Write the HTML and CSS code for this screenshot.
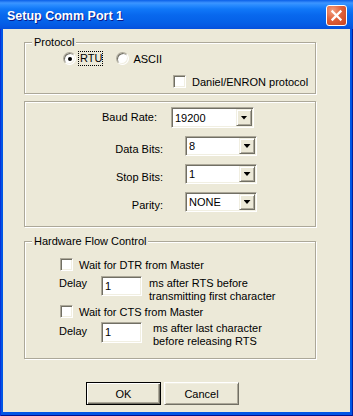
FILE: index.html
```html
<!DOCTYPE html>
<html lang="en">
<head>
    <meta charset="UTF-8">
    <title>Setup Comm Port 1</title>
    <link rel="stylesheet" href="styles.css">
</head>
<body>
    <div class="window">
        <div class="titlebar">
            <span class="title">Setup Comm Port 1</span>
            <span class="close">
                <svg width="19" height="19" viewBox="0 0 19 19"><path d="M5.5 5.5 L13.5 13.5 M13.5 5.5 L5.5 13.5" stroke="#fff" stroke-width="2.3" stroke-linecap="square"/></svg>
            </span>
        </div>

        <div class="client">
            <!-- Protocol -->
            <div class="group protocol">
                <span class="legend">Protocol</span>
                <div class="radios">
                    <span class="radio on"></span><span class="focus">RTU</span>
                    <span class="radio second"></span><span class="radio-text">ASCII</span>
                </div>
                <div class="check daniel"><span class="box"></span>Daniel/ENRON protocol</div>
            </div>

            <!-- Serial settings -->
            <div class="group serial">
                <div class="field baud">
                    <span class="label">Baud Rate:</span>
                    <div class="combo"><span class="value">19200</span><span class="drop"></span></div>
                </div>
                <div class="field">
                    <span class="label">Data Bits:</span>
                    <div class="combo"><span class="value">8</span><span class="drop"></span></div>
                </div>
                <div class="field">
                    <span class="label">Stop Bits:</span>
                    <div class="combo"><span class="value">1</span><span class="drop"></span></div>
                </div>
                <div class="field">
                    <span class="label">Parity:</span>
                    <div class="combo"><span class="value">NONE</span><span class="drop"></span></div>
                </div>
            </div>

            <!-- Hardware flow control -->
            <div class="group flow">
                <span class="legend">Hardware Flow Control</span>
                <div class="check dtr"><span class="box"></span>Wait for DTR from Master</div>
                <div class="delay first">
                    <span class="delay-label">Delay</span>
                    <span class="edit">1</span>
                    <span class="note">ms after RTS before<br>transmitting first character</span>
                </div>
                <div class="check cts"><span class="box"></span>Wait for CTS from Master</div>
                <div class="delay second">
                    <span class="delay-label">Delay</span>
                    <span class="edit">1</span>
                    <span class="note">ms after last character<br>before releasing RTS</span>
                </div>
            </div>

            <div class="buttons">
                <button class="btn default">OK</button>
                <button class="btn">Cancel</button>
            </div>
        </div>
    </div>
</body>
</html>
```

FILE: styles.css
```css
body {
    margin: 0;
    font-family: "Liberation Sans", Arial, sans-serif;
    font-size: 11px;
    color: #000;
}
.window {
    width: 353px;
    height: 416px;
    background: #0055e5;
    box-shadow: inset 1px 0 #0831d9, inset -1px 0 #001ea0, inset 0 -1px #001090;
}
.titlebar {
    height: 29px;
    display: flex;
    justify-content: space-between;
    align-items: flex-start;
    padding: 0 6px 0 7px;
    background: linear-gradient(#0a5fe8 0, #3d95ff 3px, #2a8cff 5px, #1078f8 9px, #0868ee 15px, #0561e8 22px, #0559e3 26px, #0550dc 29px);
}
.title {
    margin-top: 9px;
    line-height: 14px;
    font-size: 12.5px;
    font-weight: bold;
    color: #fff;
    text-shadow: 1px 1px #0a1a8a;
}
.close {
    margin-top: 5px;
    width: 21px;
    height: 21px;
    box-sizing: border-box;
    border: 1px solid #fff;
    border-radius: 3px;
    background: radial-gradient(circle at 30% 25%, #f3a182 0, #e0623b 45%, #c9431f 100%);
    display: flex;
}
.client {
    margin: 0 3px;
    height: 383px;
    box-sizing: border-box;
    padding: 13px 0 0 21px;
    background: #ece9d8;
}

/* group boxes */
.group {
    width: 292px;
    box-sizing: border-box;
    border: 1px solid #aca899;
    box-shadow: 1px 1px 0 #fff, inset 1px 1px 0 #fff;
}
.legend {
    display: block;
    width: fit-content;
    height: 13px;
    line-height: 13px;
    margin: -7px 0 0 7px;
    padding: 0 2px;
    background: #ece9d8;
}
.protocol { height: 52px; }
.serial { height: 126px; margin-top: 7px; }
.flow { height: 118px; margin-top: 14px; }

/* radios and checks */
.radios {
    display: flex;
    align-items: center;
    height: 15px;
    margin: 2px 0 0 38px;
}
.radio {
    width: 13px;
    height: 13px;
    box-sizing: border-box;
    border-radius: 50%;
    border: 1px solid;
    border-color: #aca899 #fff #fff #aca899;
    box-shadow: inset 1px 1px #716f64, inset -1px -1px #f1efe2;
    background: #fff;
    display: flex;
    align-items: center;
    justify-content: center;
}
.radio.on::after {
    content: "";
    width: 4px;
    height: 4px;
    border-radius: 50%;
    background: #000;
}
.radio.second { margin-left: 13px; }
.focus {
    margin-left: 2px;
    padding-left: 1px;
    line-height: 13px;
    border: 1px dotted #000;
}
.radio-text { margin-left: 4px; }
.check {
    display: flex;
    align-items: center;
    height: 15px;
}
.box {
    width: 13px;
    height: 13px;
    box-sizing: border-box;
    margin-right: 6px;
    border: 1px solid;
    border-color: #aca899 #fff #fff #aca899;
    box-shadow: inset 1px 1px #716f64, inset -1px -1px #f1efe2;
    background: #fff;
}
.daniel { margin: 8px 0 0 148px; }
.dtr { margin: 9px 0 0 35px; }
.cts { margin: 1px 0 0 35px; }

/* combo rows */
.field {
    display: flex;
    align-items: center;
    height: 20px;
    margin-top: 8px;
}
.field .label {
    width: 138px;
    text-align: right;
    line-height: 13px;
    padding-top: 6px;
}
.field .combo {
    margin-left: 22px;
    width: 72px;
}
.field.baud { height: 21px; margin-top: 5px; }
.field.baud .label { width: 132px; padding-top: 0; }
.field.baud .combo { margin-left: 14px; width: 83px; }
.combo {
    height: 100%;
    box-sizing: border-box;
    display: flex;
    align-items: center;
    padding: 1px;
    border: 1px solid;
    border-color: #aca899 #fff #fff #aca899;
    box-shadow: inset 1px 1px #716f64, inset -1px -1px #f1efe2;
    background: #fff;
}
.value { padding-left: 2px; }
.drop {
    margin-left: auto;
    width: 16px;
    height: 100%;
    box-sizing: border-box;
    border: 1px solid;
    border-color: #f1efe2 #716f64 #716f64 #f1efe2;
    box-shadow: inset 1px 1px #fff, inset -1px -1px #aca899;
    background: #ece9d8;
    display: flex;
    align-items: center;
    justify-content: center;
}
.drop::after {
    content: "";
    width: 7px;
    height: 4px;
    background: #000;
    clip-path: polygon(0 0, 100% 0, 50% 100%);
}

/* delay rows */
.delay {
    display: flex;
    align-items: flex-start;
    line-height: 13px;
}
.delay-label {
    width: 42px;
    margin-left: 34px;
}
.edit {
    width: 41px;
    height: 20px;
    box-sizing: border-box;
    padding-left: 3px;
    line-height: 18px;
    border: 1px solid;
    border-color: #aca899 #fff #fff #aca899;
    box-shadow: inset 1px 1px #716f64, inset -1px -1px #f1efe2;
    background: #fff;
}
.delay.first { margin-top: 4px; }
.delay.first .delay-label { padding-top: 1px; }
.delay.first .note { margin-left: 7px; padding-top: 1px; }
.delay.second { margin-top: 3px; }
.delay.second .delay-label { padding-top: 3px; }
.delay.second .edit { height: 21px; line-height: 19px; }
.delay.second .note { margin-left: 11px; }

/* buttons */
.buttons {
    display: flex;
    gap: 3px;
    margin: 23px 0 0 62px;
}
.btn {
    width: 75px;
    height: 23px;
    padding: 0;
    font: inherit;
    color: #000;
    background: #ece9d8;
    border: 1px solid;
    border-color: #fff #716f64 #716f64 #fff;
    box-shadow: inset 1px 1px #f1efe2, inset -1px -1px #aca899;
}
.btn.default {
    border-color: #000;
    box-shadow: inset 1px 1px #fff, inset -1px -1px #716f64, inset -2px -2px #aca899;
}
```
